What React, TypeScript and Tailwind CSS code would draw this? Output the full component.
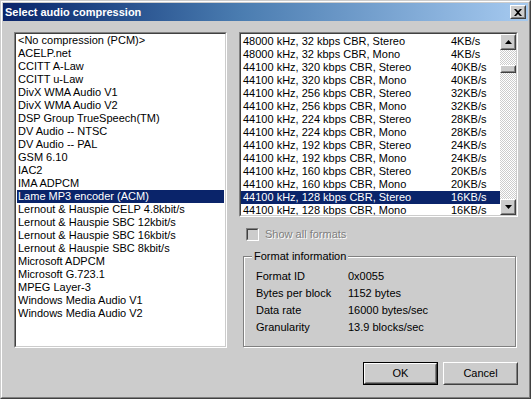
import React from "react";

const codecs = [
  "<No compression (PCM)>",
  "ACELP.net",
  "CCITT A-Law",
  "CCITT u-Law",
  "DivX WMA Audio V1",
  "DivX WMA Audio V2",
  "DSP Group TrueSpeech(TM)",
  "DV Audio -- NTSC",
  "DV Audio -- PAL",
  "GSM 6.10",
  "IAC2",
  "IMA ADPCM",
  "Lame MP3 encoder (ACM)",
  "Lernout & Hauspie CELP 4.8kbit/s",
  "Lernout & Hauspie SBC 12kbit/s",
  "Lernout & Hauspie SBC 16kbit/s",
  "Lernout & Hauspie SBC 8kbit/s",
  "Microsoft ADPCM",
  "Microsoft G.723.1",
  "MPEG Layer-3",
  "Windows Media Audio V1",
  "Windows Media Audio V2",
];

const formats: [string, string][] = [
  ["48000 kHz, 32 kbps CBR, Stereo", "4KB/s"],
  ["48000 kHz, 32 kbps CBR, Mono", "4KB/s"],
  ["44100 kHz, 320 kbps CBR, Stereo", "40KB/s"],
  ["44100 kHz, 320 kbps CBR, Mono", "40KB/s"],
  ["44100 kHz, 256 kbps CBR, Stereo", "32KB/s"],
  ["44100 kHz, 256 kbps CBR, Mono", "32KB/s"],
  ["44100 kHz, 224 kbps CBR, Stereo", "28KB/s"],
  ["44100 kHz, 224 kbps CBR, Mono", "28KB/s"],
  ["44100 kHz, 192 kbps CBR, Stereo", "24KB/s"],
  ["44100 kHz, 192 kbps CBR, Mono", "24KB/s"],
  ["44100 kHz, 160 kbps CBR, Stereo", "20KB/s"],
  ["44100 kHz, 160 kbps CBR, Mono", "20KB/s"],
  ["44100 kHz, 128 kbps CBR, Stereo", "16KB/s"],
  ["44100 kHz, 128 kbps CBR, Mono", "16KB/s"],
];

const info: [string, string][] = [
  ["Format ID", "0x0055"],
  ["Bytes per block", "1152 bytes"],
  ["Data rate", "16000 bytes/sec"],
  ["Granularity", "13.9 blocks/sec"],
];

// classic 3d bevels
function Raised({ className = "", children }: { className?: string; children?: React.ReactNode }) {
  return (
    <div className={`border border-t-white border-l-white border-r-[#404040] border-b-[#404040] ${className}`}>
      <div className="w-full h-full flex items-center justify-center border border-t-[#cccccc] border-l-[#cccccc] border-r-[#808080] border-b-[#808080] bg-[#cccccc]">
        {children}
      </div>
    </div>
  );
}

function Sunken({ className = "", inner = "bg-white", children }: { className?: string; inner?: string; children?: React.ReactNode }) {
  return (
    <div className={`border border-t-[#808080] border-l-[#808080] border-r-white border-b-white ${className}`}>
      <div className={`w-full h-full border border-t-[#404040] border-l-[#404040] border-r-[#cccccc] border-b-[#cccccc] overflow-hidden ${inner}`}>
        {children}
      </div>
    </div>
  );
}

function Arrow({ up }: { up?: boolean }) {
  return (
    <svg width="7" height="4" viewBox="0 0 7 4">
      <path d={up ? "M3.5 0 L7 4 L0 4 Z" : "M0 0 L7 0 L3.5 4 Z"} fill="#000" />
    </svg>
  );
}

export default function App() {
  return (
    <div className="w-[531px] h-[399px] bg-[#cccccc] text-[11px] leading-none text-black font-['Liberation_Sans',Arial,sans-serif]">
      <div className="w-full h-full border border-t-[#cccccc] border-l-[#cccccc] border-r-[#404040] border-b-[#404040]">
        <div className="w-full h-full flex flex-col p-px border border-t-white border-l-white border-r-[#808080] border-b-[#808080]">
          {/* Title bar */}
          <div className="h-[18px] shrink-0 flex items-center pl-[2px] pr-[2px] bg-linear-to-r from-[#0a246a] via-[#4a7cb0] via-45% to-[#a6caf0]">
            <span className="text-white font-bold text-[11px]">Select audio compression</span>
            <Raised className="ml-auto w-[16px] h-[14px]">
              <svg width="8" height="7" viewBox="0 0 8 7">
                <path d="M0 0h2l2 2 2-2h2L5 3.5 8 7H6L4 5 2 7H0l3-3.5z" fill="#000" />
              </svg>
            </Raised>
          </div>

          {/* Body */}
          <div className="flex-1 flex flex-col pl-[11px] pt-[11px] pr-[10px]">
            <div className="flex gap-[12px] items-start">
              {/* Codec list */}
              <Sunken className="w-[213px] h-[316px] shrink-0">
                <div className="px-px">
                  {codecs.map((c, i) => (
                    <div
                      key={c}
                      className={`h-[13px] flex items-center px-[1px] whitespace-nowrap ${i === 12 ? "bg-[#0a246a] text-white" : ""}`}
                    >
                      {c}
                    </div>
                  ))}
                </div>
              </Sunken>

              {/* Right column */}
              <div className="w-[279px] flex flex-col">
                <Sunken className="h-[185px]">
                  <div className="flex h-full">
                    <div className="flex-1 pt-px overflow-hidden">
                      {formats.map(([f, r], i) => (
                        <div
                          key={f}
                          className={`h-[13px] flex items-center pl-[2px] whitespace-nowrap ${i === 12 ? "bg-[#0a246a] text-white" : ""}`}
                        >
                          <span className="w-[208px] shrink-0">{f}</span>
                          <span>{r}</span>
                        </div>
                      ))}
                    </div>
                    <div className="w-[16px] flex flex-col">
                      <Raised className="h-[16px] shrink-0">
                        <Arrow up />
                      </Raised>
                      <div className="flex-1 pt-[15px] bg-[conic-gradient(#fff_25%,#cccccc_0_50%,#fff_0_75%,#cccccc_0)] bg-size-[2px_2px]">
                        <Raised className="h-[8px]" />
                      </div>
                      <Raised className="h-[16px] shrink-0">
                        <Arrow />
                      </Raised>
                    </div>
                  </div>
                </Sunken>

                {/* Show all formats */}
                <div className="mt-[11px] ml-[7px] flex items-center gap-[6px] h-[13px]">
                  <Sunken className="w-[13px] h-[13px]" inner="bg-[#cccccc]" />
                  <span className="text-[#808080] [text-shadow:1px_1px_0_#fff]">Show all formats</span>
                </div>

                {/* Format information */}
                <div className="relative mt-[15px] ml-[4px] mr-[2px] h-[91px] border border-[#808080] shadow-[inset_1px_1px_0_#fff,1px_1px_0_#fff]">
                  <span className="absolute left-[8px] -top-[6px] px-[2px] bg-[#cccccc]">Format information</span>
                  <div className="pt-[11px] pl-[12px] flex flex-col">
                    {info.map(([k, v]) => (
                      <div key={k} className="h-[17px] flex items-center">
                        <span className="w-[92px] shrink-0">{k}</span>
                        <span>{v}</span>
                      </div>
                    ))}
                  </div>
                </div>
              </div>
            </div>

            {/* Buttons */}
            <div className="mt-[14px] flex justify-end gap-[5px]">
              <div className="w-[75px] h-[23px] border border-black">
                <Raised className="w-full h-full">OK</Raised>
              </div>
              <Raised className="w-[75px] h-[23px]">Cancel</Raised>
            </div>
          </div>
        </div>
      </div>
    </div>
  );
}
